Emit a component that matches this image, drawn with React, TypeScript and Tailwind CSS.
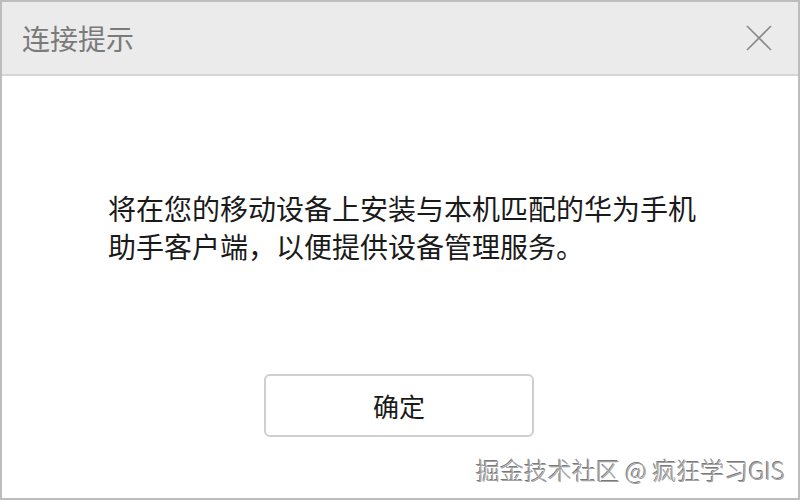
export default function App() {
  return (
    <div
      className="relative w-[800px] h-[500px] flex flex-col border-2 border-[#bdbdbd] bg-white overflow-hidden"
      style={{ fontFamily: '"Noto Sans CJK SC", "Noto Sans", sans-serif' }}
    >
      {/* header */}
      <div className="h-[74px] shrink-0 flex items-center justify-between pl-5 pr-[26px] bg-[#ebebeb] border-b-2 border-[#d6d6d6]">
        <span className="text-[28px] leading-none text-[#7a7a7a]">连接提示</span>
        <svg width="26" height="26" viewBox="0 0 26 26" className="mt-[-1px]">
          <path d="M1 1 L25 25 M25 1 L1 25" stroke="#8a8a8a" strokeWidth="1.6" fill="none" />
        </svg>
      </div>

      {/* body */}
      <div className="flex-1 flex flex-col pt-[113px]">
        <p className="pl-[106px] text-[28px] leading-[38px] text-[#1a1a1a]">
          将在您的移动设备上安装与本机匹配的华为手机
          <br />
          助手客户端，以便提供设备管理服务。
        </p>
        <div className="mt-[109px] pl-[262px]">
          <button className="w-[270px] h-[63px] rounded-[6px] border-2 border-[#cfcfcf] bg-white text-[26px] text-[#1a1a1a] flex items-center justify-center">
            确定
          </button>
        </div>
      </div>

      {/* watermark */}
      <div
        className="absolute right-[13px] bottom-[16px] text-[24px] leading-none text-[#a3a3a3] font-light"
        style={{ textShadow: '1px 1px 0 #ffffff, -1px -1px 0 #7a7a7a' }}
      >
        掘金技术社区 @ 疯狂学习GIS
      </div>
    </div>
  );
}
